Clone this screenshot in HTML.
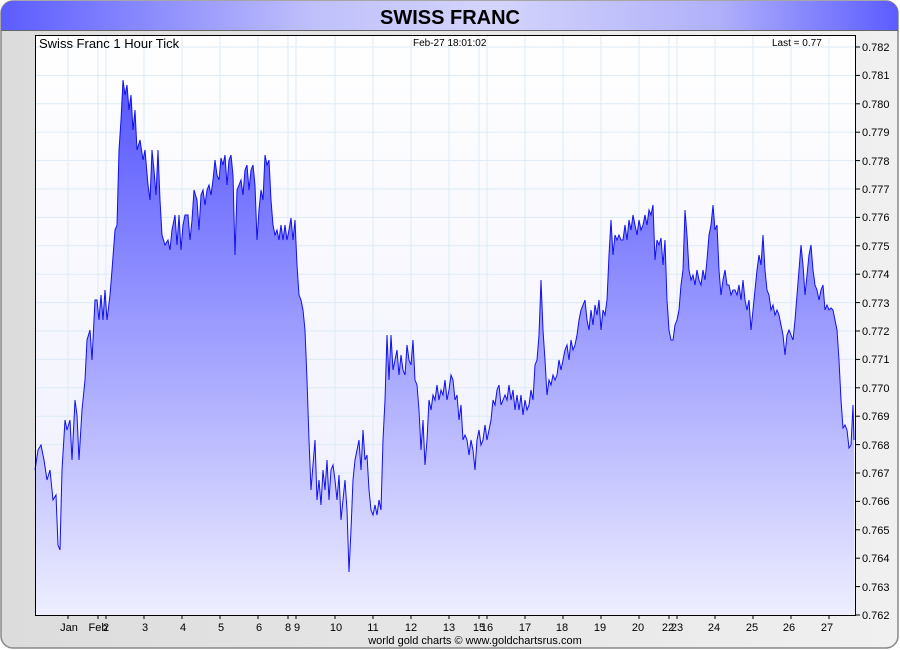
<!DOCTYPE html>
<html><head><meta charset="utf-8"><style>
html,body{margin:0;padding:0;width:900px;height:650px;overflow:hidden;background:#fff;}
svg{display:block;font-family:"Liberation Sans",Arial,sans-serif;}
</style></head><body>
<svg width="900" height="650" viewBox="0 0 900 650" xmlns="http://www.w3.org/2000/svg">
<defs>
<linearGradient id="hdr" x1="0" x2="1" y1="0" y2="0">
<stop offset="0" stop-color="#5c5cff"/><stop offset="0.35" stop-color="#c0c0fb"/><stop offset="0.55" stop-color="#d4d4fb"/><stop offset="0.8" stop-color="#b0b0fb"/><stop offset="1" stop-color="#5c5cff"/>
</linearGradient>
<linearGradient id="bg" x1="0" x2="0" y1="0" y2="1"><stop offset="0" stop-color="#ffffff"/><stop offset="1" stop-color="#eeeefd"/></linearGradient>
<linearGradient id="fill" x1="0" x2="0" y1="80" y2="615" gradientUnits="userSpaceOnUse"><stop offset="0" stop-color="#5555ff"/><stop offset="1" stop-color="#eeeeff"/></linearGradient>
<linearGradient id="frame" x1="0" x2="1" y1="0" y2="0"><stop offset="0" stop-color="#dcdcdc"/><stop offset="1" stop-color="#f0f0f0"/></linearGradient>
</defs>
<rect x="1" y="1" width="897" height="647" rx="12" fill="url(#frame)" stroke="#888" stroke-width="1.5"/>
<path d="M1 30 V13 A12 12 0 0 1 13 1 H886 A12 12 0 0 1 898 13 V30 Z" fill="url(#hdr)"/>
<line x1="1" y1="30.5" x2="898" y2="30.5" stroke="#666"/>
<text x="450" y="24" text-anchor="middle" font-size="20" font-weight="bold" fill="#000">SWISS FRANC</text>
<rect x="35" y="35" width="820" height="580" fill="url(#bg)"/>
<g stroke="#dcebf6" stroke-width="1">
<line x1="35" x2="855" y1="75.4" y2="75.4"/><line x1="35" x2="855" y1="103.8" y2="103.8"/><line x1="35" x2="855" y1="132.2" y2="132.2"/><line x1="35" x2="855" y1="160.6" y2="160.6"/><line x1="35" x2="855" y1="189" y2="189"/><line x1="35" x2="855" y1="217.4" y2="217.4"/><line x1="35" x2="855" y1="245.8" y2="245.8"/><line x1="35" x2="855" y1="274.2" y2="274.2"/><line x1="35" x2="855" y1="302.6" y2="302.6"/><line x1="35" x2="855" y1="331" y2="331"/><line x1="35" x2="855" y1="359.4" y2="359.4"/><line x1="35" x2="855" y1="387.8" y2="387.8"/><line x1="35" x2="855" y1="416.2" y2="416.2"/><line x1="35" x2="855" y1="444.6" y2="444.6"/><line x1="35" x2="855" y1="473" y2="473"/><line x1="35" x2="855" y1="501.4" y2="501.4"/><line x1="35" x2="855" y1="529.8" y2="529.8"/><line x1="35" x2="855" y1="558.2" y2="558.2"/><line x1="35" x2="855" y1="586.6" y2="586.6"/><line x1="35" x2="855" y1="47" y2="47"/>
<line y1="35" y2="615" x1="68" x2="68"/><line y1="35" y2="615" x1="98" x2="98"/><line y1="35" y2="615" x1="106" x2="106"/><line y1="35" y2="615" x1="144" x2="144"/><line y1="35" y2="615" x1="182" x2="182"/><line y1="35" y2="615" x1="220" x2="220"/><line y1="35" y2="615" x1="258" x2="258"/><line y1="35" y2="615" x1="288" x2="288"/><line y1="35" y2="615" x1="296" x2="296"/><line y1="35" y2="615" x1="335" x2="335"/><line y1="35" y2="615" x1="373" x2="373"/><line y1="35" y2="615" x1="411" x2="411"/><line y1="35" y2="615" x1="449" x2="449"/><line y1="35" y2="615" x1="479" x2="479"/><line y1="35" y2="615" x1="487" x2="487"/><line y1="35" y2="615" x1="525" x2="525"/><line y1="35" y2="615" x1="563" x2="563"/><line y1="35" y2="615" x1="601" x2="601"/><line y1="35" y2="615" x1="639" x2="639"/><line y1="35" y2="615" x1="669" x2="669"/><line y1="35" y2="615" x1="677" x2="677"/><line y1="35" y2="615" x1="715" x2="715"/><line y1="35" y2="615" x1="753" x2="753"/><line y1="35" y2="615" x1="791" x2="791"/><line y1="35" y2="615" x1="829" x2="829"/>
</g>
<polygon fill="url(#fill)" stroke="none" points="35,615 35,470 38,450 41,445 44,460 47,480 50,470 53,500 56,495 58,545 60,550 62,470 65,420 67,430 70,420 72,460 75,400 77,415 79,460 82,410 85,380 87,340 90,330 92,360 95,300 97,300 99,320 101,295 103,320 105,290 107,320 110,295 112,270 115,230 117,225 119,150 121,120 123,80 125,95 127,85 129,110 131,95 133,130 135,110 137,150 140,140 143,160 145,150 148,185 150,200 152,150 154,170 156,195 158,150 160,200 162,235 165,245 168,240 170,250 172,230 175,215 177,245 179,215 181,250 183,225 185,215 188,215 190,240 192,220 194,190 197,200 199,230 201,195 203,190 205,205 207,190 209,185 211,195 213,180 215,160 217,175 219,180 221,158 223,165 225,155 227,185 229,160 231,155 233,175 235,255 237,190 239,185 241,180 243,195 245,170 247,165 249,190 251,170 253,165 255,185 257,240 259,210 261,190 263,200 265,155 267,165 269,160 271,200 273,225 275,235 277,230 279,240 281,225 283,240 285,225 287,240 289,230 291,218 293,240 295,220 297,265 299,295 301,300 303,310 305,330 307,380 309,440 311,490 313,465 315,440 317,500 319,480 321,505 323,470 325,490 327,460 329,500 331,470 333,465 335,480 337,500 339,475 341,520 343,500 345,480 347,510 349,572 351,530 353,480 355,460 357,450 359,440 361,470 363,430 365,460 367,455 369,490 371,510 373,515 375,505 377,515 379,500 381,510 383,440 385,400 387,335 389,380 391,335 393,370 395,360 397,350 399,375 401,355 403,370 405,375 407,345 409,360 411,365 413,340 415,380 417,385 419,410 421,450 423,420 425,465 427,440 429,400 431,410 433,395 435,400 437,385 439,400 441,390 443,395 445,380 447,400 449,390 451,375 453,380 455,400 457,395 459,420 461,405 463,440 465,435 467,440 469,455 471,440 473,450 475,470 477,440 479,430 481,445 483,440 485,425 487,440 489,430 491,420 493,400 495,405 497,390 499,385 501,405 503,400 505,395 507,400 509,385 511,400 513,390 515,410 517,395 519,410 521,395 523,415 525,400 527,410 529,405 531,390 533,400 535,365 537,360 539,335 541,280 543,330 545,360 547,395 549,380 551,385 553,375 555,380 557,375 559,360 561,370 563,360 565,350 567,345 569,360 571,340 573,350 575,345 577,335 579,320 581,310 583,305 585,300 587,320 589,330 591,310 593,325 595,305 597,315 599,300 601,330 603,310 605,315 607,300 609,255 611,220 613,255 615,235 617,240 619,235 621,240 623,240 625,225 627,240 629,220 631,230 633,215 635,225 637,235 639,220 641,230 643,225 645,215 647,225 649,210 651,215 653,205 655,260 657,240 659,245 661,238 663,265 665,240 667,300 669,330 671,340 673,340 675,325 677,320 679,310 681,285 683,270 685,210 687,235 689,270 691,280 693,275 695,285 697,270 699,280 701,285 703,270 705,280 707,260 709,235 711,225 713,205 715,230 717,225 719,270 721,295 723,280 725,270 727,285 729,285 731,295 733,290 735,290 737,295 739,285 741,300 743,280 745,300 747,310 749,300 751,330 753,310 755,290 757,270 759,255 761,265 763,235 765,270 767,290 769,295 771,310 773,305 775,315 777,310 779,315 781,325 783,335 785,355 787,335 789,330 791,335 793,340 795,320 797,295 799,270 801,245 803,265 805,295 807,275 809,255 811,245 813,270 815,285 817,290 819,300 821,290 823,285 825,310 827,305 829,310 831,308 833,310 835,320 837,330 839,360 841,400 843,428 845,425 847,430 849,448 851,445 853,405 854,440 854,615"/>
<polyline fill="none" stroke="#1010ee" stroke-width="1" points="35,470 38,450 41,445 44,460 47,480 50,470 53,500 56,495 58,545 60,550 62,470 65,420 67,430 70,420 72,460 75,400 77,415 79,460 82,410 85,380 87,340 90,330 92,360 95,300 97,300 99,320 101,295 103,320 105,290 107,320 110,295 112,270 115,230 117,225 119,150 121,120 123,80 125,95 127,85 129,110 131,95 133,130 135,110 137,150 140,140 143,160 145,150 148,185 150,200 152,150 154,170 156,195 158,150 160,200 162,235 165,245 168,240 170,250 172,230 175,215 177,245 179,215 181,250 183,225 185,215 188,215 190,240 192,220 194,190 197,200 199,230 201,195 203,190 205,205 207,190 209,185 211,195 213,180 215,160 217,175 219,180 221,158 223,165 225,155 227,185 229,160 231,155 233,175 235,255 237,190 239,185 241,180 243,195 245,170 247,165 249,190 251,170 253,165 255,185 257,240 259,210 261,190 263,200 265,155 267,165 269,160 271,200 273,225 275,235 277,230 279,240 281,225 283,240 285,225 287,240 289,230 291,218 293,240 295,220 297,265 299,295 301,300 303,310 305,330 307,380 309,440 311,490 313,465 315,440 317,500 319,480 321,505 323,470 325,490 327,460 329,500 331,470 333,465 335,480 337,500 339,475 341,520 343,500 345,480 347,510 349,572 351,530 353,480 355,460 357,450 359,440 361,470 363,430 365,460 367,455 369,490 371,510 373,515 375,505 377,515 379,500 381,510 383,440 385,400 387,335 389,380 391,335 393,370 395,360 397,350 399,375 401,355 403,370 405,375 407,345 409,360 411,365 413,340 415,380 417,385 419,410 421,450 423,420 425,465 427,440 429,400 431,410 433,395 435,400 437,385 439,400 441,390 443,395 445,380 447,400 449,390 451,375 453,380 455,400 457,395 459,420 461,405 463,440 465,435 467,440 469,455 471,440 473,450 475,470 477,440 479,430 481,445 483,440 485,425 487,440 489,430 491,420 493,400 495,405 497,390 499,385 501,405 503,400 505,395 507,400 509,385 511,400 513,390 515,410 517,395 519,410 521,395 523,415 525,400 527,410 529,405 531,390 533,400 535,365 537,360 539,335 541,280 543,330 545,360 547,395 549,380 551,385 553,375 555,380 557,375 559,360 561,370 563,360 565,350 567,345 569,360 571,340 573,350 575,345 577,335 579,320 581,310 583,305 585,300 587,320 589,330 591,310 593,325 595,305 597,315 599,300 601,330 603,310 605,315 607,300 609,255 611,220 613,255 615,235 617,240 619,235 621,240 623,240 625,225 627,240 629,220 631,230 633,215 635,225 637,235 639,220 641,230 643,225 645,215 647,225 649,210 651,215 653,205 655,260 657,240 659,245 661,238 663,265 665,240 667,300 669,330 671,340 673,340 675,325 677,320 679,310 681,285 683,270 685,210 687,235 689,270 691,280 693,275 695,285 697,270 699,280 701,285 703,270 705,280 707,260 709,235 711,225 713,205 715,230 717,225 719,270 721,295 723,280 725,270 727,285 729,285 731,295 733,290 735,290 737,295 739,285 741,300 743,280 745,300 747,310 749,300 751,330 753,310 755,290 757,270 759,255 761,265 763,235 765,270 767,290 769,295 771,310 773,305 775,315 777,310 779,315 781,325 783,335 785,355 787,335 789,330 791,335 793,340 795,320 797,295 799,270 801,245 803,265 805,295 807,275 809,255 811,245 813,270 815,285 817,290 819,300 821,290 823,285 825,310 827,305 829,310 831,308 833,310 835,320 837,330 839,360 841,400 843,428 845,425 847,430 849,448 851,445 853,405 854,440"/>
<rect x="35.5" y="35.5" width="820" height="580" fill="none" stroke="#000" stroke-width="1"/>
<text x="39" y="48" font-size="13" fill="#000">Swiss Franc 1 Hour Tick</text>
<text x="413" y="46" font-size="10" fill="#000">Feb-27  18:01:02</text>
<text x="772" y="46" font-size="10" fill="#000">Last = 0.77</text>
<g stroke="#000"><line x1="855" x2="860" y1="47" y2="47"/><line x1="855" x2="860" y1="75.4" y2="75.4"/><line x1="855" x2="860" y1="103.8" y2="103.8"/><line x1="855" x2="860" y1="132.2" y2="132.2"/><line x1="855" x2="860" y1="160.6" y2="160.6"/><line x1="855" x2="860" y1="189" y2="189"/><line x1="855" x2="860" y1="217.4" y2="217.4"/><line x1="855" x2="860" y1="245.8" y2="245.8"/><line x1="855" x2="860" y1="274.2" y2="274.2"/><line x1="855" x2="860" y1="302.6" y2="302.6"/><line x1="855" x2="860" y1="331" y2="331"/><line x1="855" x2="860" y1="359.4" y2="359.4"/><line x1="855" x2="860" y1="387.8" y2="387.8"/><line x1="855" x2="860" y1="416.2" y2="416.2"/><line x1="855" x2="860" y1="444.6" y2="444.6"/><line x1="855" x2="860" y1="473" y2="473"/><line x1="855" x2="860" y1="501.4" y2="501.4"/><line x1="855" x2="860" y1="529.8" y2="529.8"/><line x1="855" x2="860" y1="558.2" y2="558.2"/><line x1="855" x2="860" y1="586.6" y2="586.6"/><line x1="855" x2="860" y1="615" y2="615"/></g>
<g font-size="11" fill="#000">
<text x="862" y="51">0.782</text><text x="862" y="79">0.781</text><text x="862" y="108">0.780</text><text x="862" y="136">0.779</text><text x="862" y="165">0.778</text><text x="862" y="193">0.777</text><text x="862" y="221">0.776</text><text x="862" y="250">0.775</text><text x="862" y="278">0.774</text><text x="862" y="307">0.773</text><text x="862" y="335">0.772</text><text x="862" y="363">0.771</text><text x="862" y="392">0.770</text><text x="862" y="420">0.769</text><text x="862" y="449">0.768</text><text x="862" y="477">0.767</text><text x="862" y="505">0.766</text><text x="862" y="534">0.765</text><text x="862" y="562">0.764</text><text x="862" y="591">0.763</text><text x="862" y="619">0.762</text>
</g>
<g stroke="#000"><line x1="68" x2="68" y1="615" y2="619"/><line x1="98" x2="98" y1="615" y2="619"/><line x1="106" x2="106" y1="615" y2="619"/><line x1="144" x2="144" y1="615" y2="619"/><line x1="182" x2="182" y1="615" y2="619"/><line x1="220" x2="220" y1="615" y2="619"/><line x1="258" x2="258" y1="615" y2="619"/><line x1="288" x2="288" y1="615" y2="619"/><line x1="296" x2="296" y1="615" y2="619"/><line x1="335" x2="335" y1="615" y2="619"/><line x1="373" x2="373" y1="615" y2="619"/><line x1="411" x2="411" y1="615" y2="619"/><line x1="449" x2="449" y1="615" y2="619"/><line x1="479" x2="479" y1="615" y2="619"/><line x1="487" x2="487" y1="615" y2="619"/><line x1="525" x2="525" y1="615" y2="619"/><line x1="563" x2="563" y1="615" y2="619"/><line x1="601" x2="601" y1="615" y2="619"/><line x1="639" x2="639" y1="615" y2="619"/><line x1="669" x2="669" y1="615" y2="619"/><line x1="677" x2="677" y1="615" y2="619"/><line x1="715" x2="715" y1="615" y2="619"/><line x1="753" x2="753" y1="615" y2="619"/><line x1="791" x2="791" y1="615" y2="619"/><line x1="829" x2="829" y1="615" y2="619"/></g>
<g font-size="11" fill="#000" text-anchor="middle">
<text x="69" y="631">Jan</text><text x="98" y="631">Feb</text><text x="106" y="631">2</text><text x="145" y="631">3</text><text x="183" y="631">4</text><text x="221" y="631">5</text><text x="259" y="631">6</text><text x="288" y="631">8</text><text x="297" y="631">9</text><text x="336" y="631">10</text><text x="373" y="631">11</text><text x="411" y="631">12</text><text x="449" y="631">13</text><text x="479" y="631">15</text><text x="487" y="631">16</text><text x="525" y="631">17</text><text x="562" y="631">18</text><text x="600" y="631">19</text><text x="638" y="631">20</text><text x="668" y="631">22</text><text x="677" y="631">23</text><text x="714" y="631">24</text><text x="752" y="631">25</text><text x="789" y="631">26</text><text x="827" y="631">27</text>
</g>
<text x="475" y="644" font-size="11" fill="#000" text-anchor="middle">world gold charts © www.goldchartsrus.com</text>
</svg>
</body></html>
